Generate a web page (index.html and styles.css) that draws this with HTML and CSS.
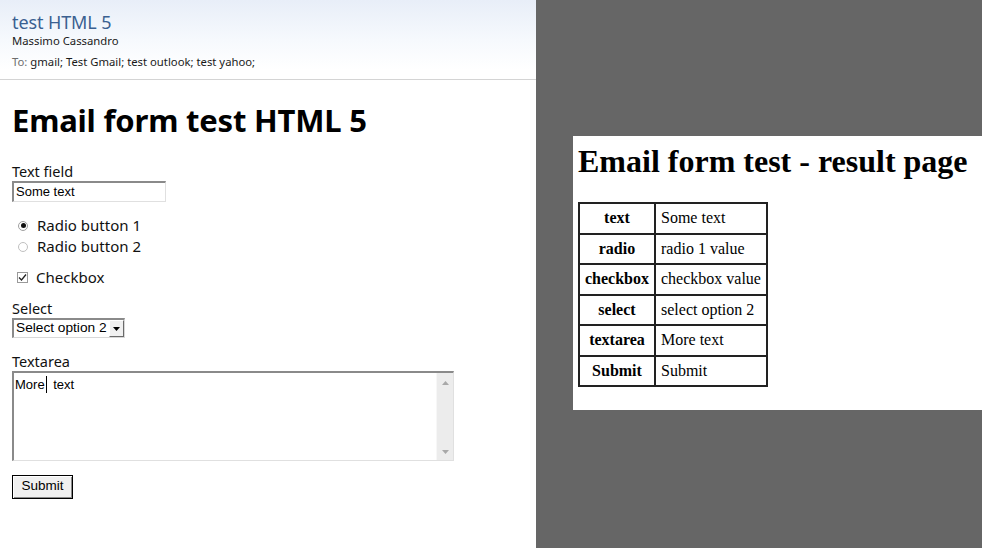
FILE: index.html
```html
<!DOCTYPE html>
<html>
<head>
<meta charset="utf-8">
<link rel="stylesheet" href="styles.css">
</head>
<body>
<div class="split">
  <div class="mail">
    <header class="mail-head">
      <div class="subject">test HTML 5</div>
      <div class="sender">Massimo Cassandro</div>
      <div class="to"><span class="to-label">To:</span> gmail; Test Gmail; test outlook; test yahoo;</div>
    </header>
    <form class="form">
      <h1 class="form-title">Email form test HTML 5</h1>
      <label class="lbl">Text field</label>
      <div class="input">Some text</div>
      <div class="choices">
        <div class="choice"><span class="radio checked"></span>Radio button 1</div>
        <div class="choice"><span class="radio"></span>Radio button 2</div>
      </div>
      <div class="choice check-row"><span class="check"><svg width="9" height="9" viewBox="0 0 9 9"><path d="M1 4.5 L3.5 7 L8 1.5" fill="none" stroke="#222" stroke-width="1.3"/></svg></span>Checkbox</div>
      <label class="lbl lbl-select">Select</label>
      <div class="select"><span class="select-val">Select option 2</span><span class="select-btn"><svg width="7" height="4" viewBox="0 0 7 4"><path d="M0 0 H7 L3.5 4 Z" fill="#000"/></svg></span></div>
      <label class="lbl lbl-area">Textarea</label>
      <div class="textarea">
        <div class="area-text">More<span class="caret"></span> text</div>
        <div class="scrollbar">
          <svg width="7" height="4" viewBox="0 0 7 4"><path d="M0 4 H7 L3.5 0 Z" fill="#a8a8a8"/></svg>
          <svg width="7" height="4" viewBox="0 0 7 4"><path d="M0 0 H7 L3.5 4 Z" fill="#a8a8a8"/></svg>
        </div>
      </div>
      <div class="submit-row"><span class="button">Submit</span></div>
    </form>
  </div>
  <div class="backdrop">
    <div class="result">
      <h1 class="result-title">Email form test - result page</h1>
      <table class="result-table">
        <tr><th>text</th><td>Some text</td></tr>
        <tr><th>radio</th><td>radio 1 value</td></tr>
        <tr><th>checkbox</th><td>checkbox value</td></tr>
        <tr><th>select</th><td>select option 2</td></tr>
        <tr><th>textarea</th><td>More text</td></tr>
        <tr><th>Submit</th><td>Submit</td></tr>
      </table>
    </div>
  </div>
</div>
</body>
</html>
```

FILE: styles.css
```css
* { box-sizing: border-box; }
html, body { margin: 0; padding: 0; }
body { width: 982px; height: 548px; overflow: hidden; font-family: "Noto Sans", "Open Sans", sans-serif; color: #000; }

.split { display: flex; height: 548px; }

.mail { width: 536px; background: #fff; }
.mail-head {
  height: 80px;
  padding: 11px 0 0 12px;
  background: linear-gradient(to bottom, #e8eef8 0px, #f6f9fd 40px, #ffffff 70px);
  border-bottom: 1px solid #d4d4d4;
}
.subject { font-size: 18px; line-height: 22px; color: #3b6091; letter-spacing: -0.1px; }
.sender { font-size: 11.3px; line-height: 14px; color: #1a1a1a; margin-top: 1px; }
.to { font-size: 11.3px; line-height: 14px; color: #1a1a1a; margin-top: 7px; }
.to-label { color: #6d6d6d; }

.form { padding: 0 0 0 12px; display: flex; flex-direction: column; align-items: flex-start; }
.form-title { font-size: 31px; font-weight: 700; line-height: 40px; margin: 20px 0 0 0; letter-spacing: -0.2px; }

.lbl { font-size: 14.5px; line-height: 18px; display: block; color: #111; }
.form-title + .lbl { margin-top: 22px; }

.input {
  width: 154px; height: 21px; margin-top: 1px;
  border-style: solid; border-width: 2px 1px 1px 2px;
  border-color: #8a8a8a #e0e0e0 #e0e0e0 #8a8a8a;
  font-family: "Liberation Sans", Arial, sans-serif; font-size: 13px; line-height: 17px;
  padding-left: 2px;
}

.choices { margin-top: 13px; display: flex; flex-direction: column; }
.choice { display: flex; align-items: center; font-size: 15px; line-height: 21px; color: #111; }
.radio {
  width: 10px; height: 10px; border-radius: 50%; border: 1px solid #c0c0c0;
  margin: 0 9px 0 6px; display: inline-flex; align-items: center; justify-content: center;
  background: #fff;
}
.radio.checked { border-color: #a0a0a0; }
.radio.checked::after { content: ""; width: 5px; height: 5px; border-radius: 50%; background: #111; }
.check-row { margin-top: 10px; }
.check {
  width: 11px; height: 11px; border: 1px solid #9a9a9a; margin: 0 8px 0 5px;
  display: inline-flex; align-items: center; justify-content: center; background: #fff;
}

.lbl-select { margin-top: 11px; }
.select {
  margin-top: 1px; display: flex; align-items: stretch; height: 20px; width: 113px;
  border-style: solid; border-width: 2px 1px 1px 2px;
  border-color: #8a8a8a #d8d8d8 #d8d8d8 #8a8a8a;
  font-family: "Liberation Sans", Arial, sans-serif; font-size: 13.7px; line-height: 16px;
}
.select-val { flex: 1; padding-left: 2px; white-space: nowrap; overflow: hidden; }
.select-btn {
  width: 15px; flex: none; display: flex; align-items: center; justify-content: center;
  background: #f0f0f0; border-style: solid; border-width: 1px;
  border-color: #fff #6a6a6a #6a6a6a #fff;
}

.lbl-area { margin-top: 14px; }
.textarea {
  margin-top: 1px; width: 442px; height: 90px; display: flex;
  border-style: solid; border-width: 2px 1px 1px 2px;
  border-color: #8a8a8a #e0e0e0 #e0e0e0 #8a8a8a;
}
.area-text { flex: 1; font-family: "Liberation Sans", Arial, sans-serif; font-size: 13px; line-height: 16px; padding: 3px 0 0 1px; }
.caret { display: inline-block; width: 1px; height: 17px; background: #000; vertical-align: -4px; margin: 0 3px 0 1px; }
.scrollbar {
  width: 17px; background: #ececec; border-left: 1px solid #f7f7f7;
  display: flex; flex-direction: column; justify-content: space-between; align-items: center;
  padding: 8px 0 6px 0;
}

.submit-row { margin-top: 12px; }
.button {
  display: inline-block; width: 61px; height: 24px; text-align: center;
  font-family: "Liberation Sans", Arial, sans-serif; font-size: 13.5px; line-height: 20px;
  background: #f0f0f0; border: 1px solid #000;
  box-shadow: inset 1px 1px 0 #fff, inset -1px -1px 0 #8a8a8a;
}

.backdrop { flex: 1; background: #666; padding: 136px 0 0 37px; }
.result { background: #fff; height: 274px; padding: 7px 0 0 5px; }
.result-title {
  font-family: "Liberation Serif", "Times New Roman", serif; font-size: 32px; font-weight: 700;
  line-height: 37px; margin: 0 0 22px 0;
}
.result-table {
  border-collapse: collapse; border: 2px solid #222;
  font-family: "Liberation Serif", "Times New Roman", serif; font-size: 16px;
}
.result-table th, .result-table td {
  border: 2px solid #222; height: 30.5px; padding: 0 5px; line-height: 18px;
}
.result-table th { text-align: center; font-weight: 700; }
.result-table td { text-align: left; width: 112px; }
```
